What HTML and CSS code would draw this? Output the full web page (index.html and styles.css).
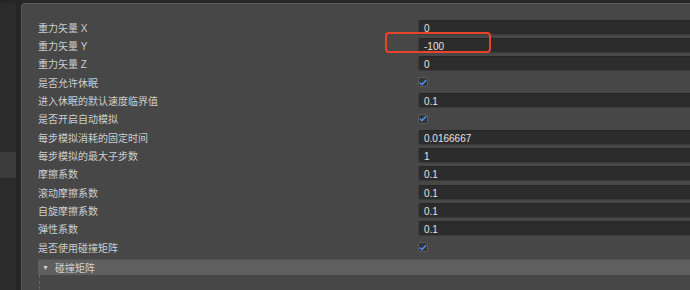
FILE: index.html
```html
<!DOCTYPE html>
<html lang="zh-CN">
<head>
    <meta charset="UTF-8">
    <title>物理设置</title>
    <link rel="stylesheet" href="styles.css">
</head>
<body>
    <div class="layout">
        <div class="side">
            <div class="side-item"></div>
        </div>

        <div class="panel">
            <div class="props">
                <div class="row">
                    <span class="label">重力矢量 X</span>
                    <div class="field">0</div>
                </div>
                <div class="row">
                    <span class="label">重力矢量 Y</span>
                    <div class="field">-100</div>
                </div>
                <div class="row">
                    <span class="label">重力矢量 Z</span>
                    <div class="field">0</div>
                </div>
                <div class="row">
                    <span class="label">是否允许休眠</span>
                    <div class="check">
                        <svg width="8" height="7" viewBox="0 0 8 7"><polyline points="0.8,3.6 3,5.6 7.2,1" fill="none" stroke="#4b8ef0" stroke-width="1.5"/></svg>
                    </div>
                </div>
                <div class="row">
                    <span class="label">进入休眠的默认速度临界值</span>
                    <div class="field">0.1</div>
                </div>
                <div class="row">
                    <span class="label">是否开启自动模拟</span>
                    <div class="check">
                        <svg width="8" height="7" viewBox="0 0 8 7"><polyline points="0.8,3.6 3,5.6 7.2,1" fill="none" stroke="#4b8ef0" stroke-width="1.5"/></svg>
                    </div>
                </div>
                <div class="row">
                    <span class="label">每步模拟消耗的固定时间</span>
                    <div class="field">0.0166667</div>
                </div>
                <div class="row">
                    <span class="label">每步模拟的最大子步数</span>
                    <div class="field">1</div>
                </div>
                <div class="row">
                    <span class="label">摩擦系数</span>
                    <div class="field">0.1</div>
                </div>
                <div class="row">
                    <span class="label">滚动摩擦系数</span>
                    <div class="field">0.1</div>
                </div>
                <div class="row">
                    <span class="label">自旋摩擦系数</span>
                    <div class="field">0.1</div>
                </div>
                <div class="row">
                    <span class="label">弹性系数</span>
                    <div class="field">0.1</div>
                </div>
                <div class="row">
                    <span class="label">是否使用碰撞矩阵</span>
                    <div class="check">
                        <svg width="8" height="7" viewBox="0 0 8 7"><polyline points="0.8,3.6 3,5.6 7.2,1" fill="none" stroke="#4b8ef0" stroke-width="1.5"/></svg>
                    </div>
                </div>

                <div class="group">
                    <div class="group-head"><span class="arrow">▼</span>碰撞矩阵</div>
                    <div class="group-body"></div>
                </div>
            </div>

            <!-- 标注框 -->
            <div class="mark"></div>
        </div>
    </div>
</body>
</html>
```

FILE: styles.css
```css
/* 基础 */
body {
    margin: 0;
    background-color: #262626;
    font-family: 'Liberation Sans', 'Noto Sans CJK SC', sans-serif;
    font-size: 10px;
    overflow: hidden;
}

.layout {
    display: flex;
    gap: 5px;
    height: 290px;
    padding-top: 3px;
    box-sizing: border-box;
}

/* 左侧面板 */
.side {
    width: 16px;
    background-color: #2b2b2b;
    border-radius: 0 4px 0 0;
    padding-top: 149px;
}

.side-item {
    height: 26px;
    background-color: #3b3b3b;
}

/* 属性面板 */
.panel {
    position: relative;
    flex: 1;
    background-color: #474747;
    border-top: 1px solid #5b5b5b;
    border-left: 1px solid #555;
    border-radius: 4px 0 0 0;
    overflow: hidden;
}

.props {
    display: flex;
    flex-direction: column;
    padding: 14px 0 0 16px;
}

.row {
    display: flex;
    align-items: center;
    height: 18.33px;
}

.label {
    width: 380px;
    color: #cdcdcd;
    flex-shrink: 0;
}

.field {
    flex: 1;
    height: 15px;
    line-height: 15px;
    margin-right: -10px;
    padding-left: 5px;
    background-color: #2c2c2c;
    border: 1px solid #3a3a3a;
    border-top-color: #262626;
    border-radius: 3px;
    color: #e2e2e2;
    box-sizing: border-box;
}

.check {
    width: 10px;
    height: 10px;
    background-color: #333;
    border: 1px solid #5c5c5c;
    border-radius: 2px;
    display: flex;
    align-items: center;
    justify-content: center;
    box-sizing: border-box;
}

/* 分组 */
.group {
    margin-top: 3px;
}

.group-head {
    display: flex;
    align-items: center;
    height: 16px;
    background-color: #5f5f5f;
    border-top: 1px solid #525252;
    color: #d0d0d0;
    box-sizing: border-box;
}

.arrow {
    font-size: 7px;
    color: #cfcfcf;
    margin: 0 6px 0 4px;
}

.group-body {
    height: 20px;
    margin-left: 1px;
    border-left: 1px dashed #686868;
}

/* 红色标注框 */
.mark {
    position: absolute;
    left: 363px;
    top: 28px;
    width: 106px;
    height: 21px;
    border: 2px solid #e8432b;
    border-radius: 4px;
    box-sizing: border-box;
}
```
